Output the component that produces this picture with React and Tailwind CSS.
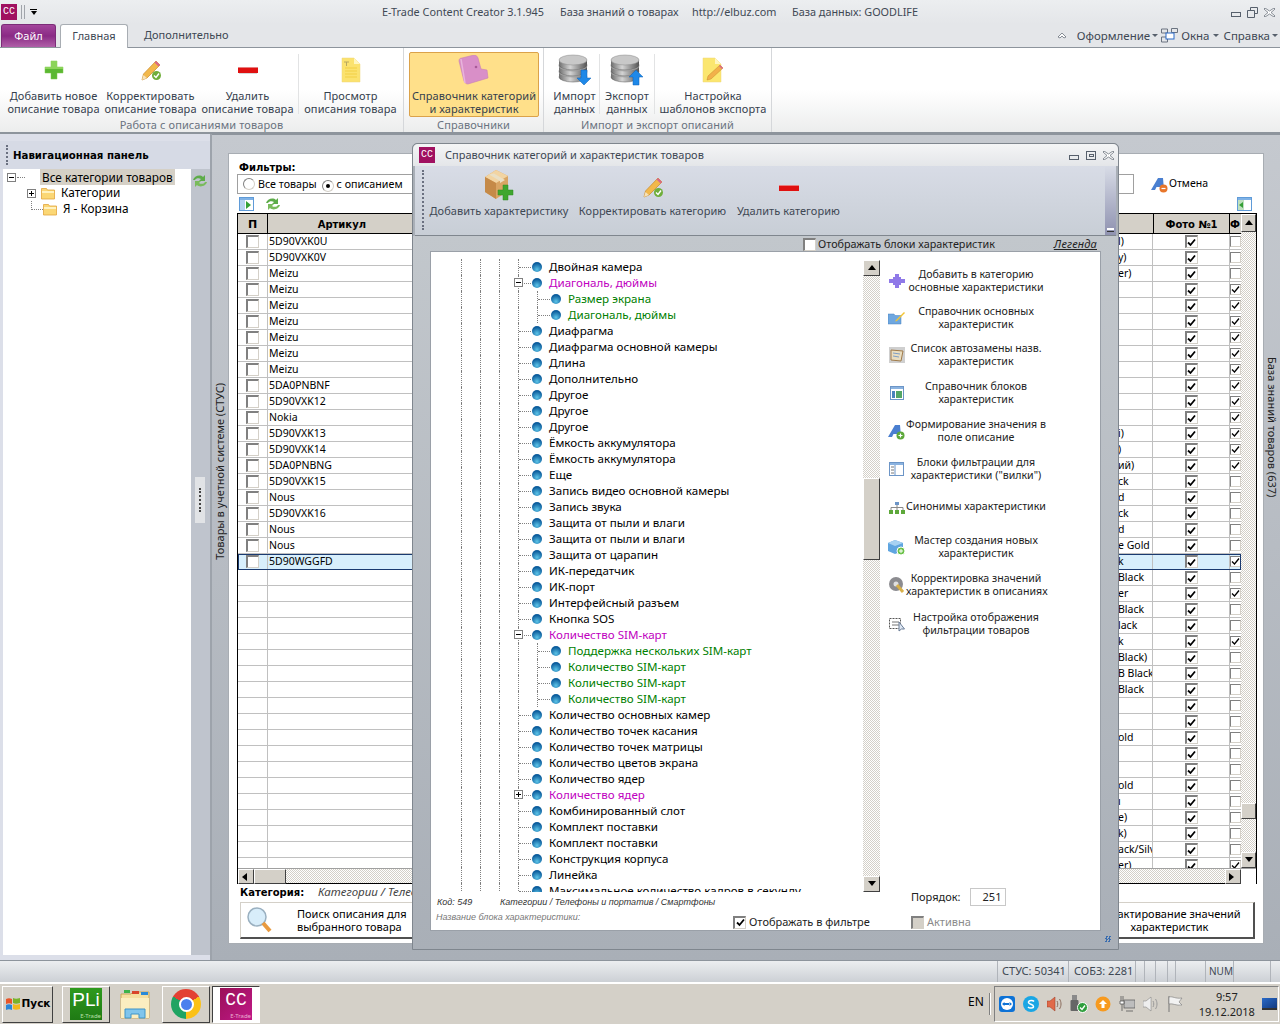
import React from "react";

const ui = "font-['Noto_Sans','Liberation_Sans',sans-serif]";
const bold = "font-['DejaVu_Sans',sans-serif] font-bold";

// --- icons ---
function GreenPlus({ s = 24 }) {
  return (
    <svg width={s} height={s} viewBox="0 0 24 24">
      <path d="M9 3h6v6h6v6h-6v6H9v-6H3V9h6z" fill="#5bb832" stroke="#7cc94e" strokeWidth="0.5" />
      <path d="M9 3h6v6h6v2H3V9h6z" fill="#8cd45a" />
    </svg>
  );
}
function PencilCheck({ s = 24 }) {
  return (
    <svg width={s} height={s} viewBox="0 0 24 24">
      <path d="M3 22l1.5-6L17 3l4 4L8 20z" fill="#f2b84b" stroke="#c98a2a" strokeWidth="0.7" />
      <path d="M17 3l4 4-1.5 1.5-4-4z" fill="#d9668a" />
      <path d="M3 22l1.5-5 3.5 3z" fill="#f6e2b8" />
      <circle cx="17.5" cy="17.5" r="4.5" fill="#6fae3a" />
      <path d="M15 17.5l2 2 3-4" stroke="#fff" strokeWidth="1.4" fill="none" />
    </svg>
  );
}
function RedMinus({ s = 24 }) {
  return (
    <svg width={s} height={s} viewBox="0 0 24 24">
      <rect x="2" y="10" width="20" height="5" fill="#e01010" />
      <rect x="2" y="9" width="20" height="1" fill="#e88080" />
      <rect x="3" y="15" width="18" height="1" fill="#d8d8d8" />
    </svg>
  );
}
function NoteIcon() {
  return (
    <svg width="24" height="26" viewBox="0 0 24 26">
      <path d="M3 1h12l6 6v18H3z" fill="#fbe26f" stroke="#efd77a" strokeWidth="0.5" />
      <path d="M15 1l6 6h-6z" fill="#fff6c0" />
      <path d="M6 11h12M6 14h12M6 17h12M6 20h12" stroke="#f2cf45" strokeWidth="1" />
      <path d="M5 5h5M7.5 5v4" stroke="#b8a860" strokeWidth="1" />
    </svg>
  );
}
function PinkBook() {
  return (
    <svg width="32" height="32" viewBox="0 0 32 32">
      <path d="M1 6c0-2 1-3 3-3l12-3c2 0 3 1 4 3l3 11 6 1 1 8-20 6c-2 0-3-1-4-3z" fill="#d98fc8" stroke="#c77fb6" strokeWidth="0.6" />
      <path d="M3 4l4 24" stroke="#e8b4dc" strokeWidth="1.5" />
      <circle cx="18" cy="12" r="1.3" fill="#a85a98" />
    </svg>
  );
}
function DbIcon({ up }) {
  return (
    <svg width="34" height="32" viewBox="0 0 34 32">
      <defs>
        <linearGradient id={up ? "dbu" : "dbd"} x1="0" x2="1" y1="0" y2="0">
          <stop offset="0" stopColor="#6e6e6e" />
          <stop offset="0.4" stopColor="#d4d4d4" />
          <stop offset="1" stopColor="#555" />
        </linearGradient>
      </defs>
      {[18, 12, 6].map((y) => (
        <g key={y}>
          <ellipse cx="15" cy={y + 5} rx="14" ry="5" fill={`url(#${up ? "dbu" : "dbd"})`} stroke="#555" strokeWidth="0.5" />
          <rect x="1" y={y} width="28" height="5" fill={`url(#${up ? "dbu" : "dbd"})`} />
          <ellipse cx="15" cy={y} rx="14" ry="5" fill="#c8c8c8" stroke="#888" strokeWidth="0.5" />
        </g>
      ))}
      {up ? (
        <path d="M26 16l7 7h-4v8h-6v-8h-4z" fill="#1e88e8" stroke="#0d62b8" strokeWidth="0.5" />
      ) : (
        <path d="M23 16h6v8h4l-7 7-7-7h4z" fill="#1e88e8" stroke="#0d62b8" strokeWidth="0.5" />
      )}
    </svg>
  );
}
function NotePencil() {
  return (
    <svg width="24" height="26" viewBox="0 0 24 26">
      <path d="M2 1h12l6 6v18H2z" fill="#fbe66f" stroke="#efd77a" strokeWidth="0.5" />
      <path d="M14 1l6 6h-6z" fill="#fff6c0" />
      <path d="M6 23l1-4L19 8l3 3L10 22z" fill="#f2b04b" stroke="#c98a2a" strokeWidth="0.5" />
      <path d="M19 8l3 3-1 1-3-3z" fill="#d9668a" />
    </svg>
  );
}
function BoxPlus() {
  return (
    <svg width="30" height="32" viewBox="0 0 30 32">
      <path d="M1 7l11-7 12 6v15l-12 8-11-7z" fill="#d9a564" />
      <path d="M1 7l11 6 12-7-12-6z" fill="#f2d4a2" />
      <path d="M12 13v16L1 22V7z" fill="#c58a48" />
      <path d="M5 4.5l11 6.5v2l5-3-11-6.5z" fill="#eadfc4" />
      <path d="M19 15h5v5h5v5h-5v5h-5v-5h-5v-5h5z" fill="#3fa62e" stroke="#2f8a22" strokeWidth="0.5" />
    </svg>
  );
}
function Sync({ s = 16 }) {
  return (
    <svg width={s} height={s} viewBox="0 0 16 16">
      <path d="M1 7c1-4 7-6 10-3l2-2v6H7l2-2C7 4.500 4 5 3 7z" fill="#5dac49" />
      <path d="M15 9c-1 4-7 6-10 3l-2 2V8h6l-2 2c2 1.500 5 1 6-1z" fill="#79bb5c" />
    </svg>
  );
}
function PanelArrow({ back }) {
  return (
    <svg width="15" height="14" viewBox="0 0 15 14">
      <rect x="0.5" y="0.500" width="14" height="13" fill="#fff" stroke="#5f9bd8" />
      <rect x="1" y="1" width="13" height="2" fill="#7fb2e6" />
      {back ? (
        <>
          <rect x="1" y="3" width="6" height="10" fill="#bfe0bf" />
          <path d="M6 5v6L2 8z" fill="#35a035" />
        </>
      ) : (
        <>
          <rect x="1" y="3" width="5" height="10" fill="#b7d3f0" />
          <path d="M7 4v8l5-4z" fill="#35a035" />
        </>
      )}
    </svg>
  );
}
function FontBadge({ minus }) {
  return (
    <svg width="17" height="17" viewBox="0 0 17 17">
      <path d="M0 14L7 2h5l1 12h-3l-.3-3H5.500L4 14z" fill="#4a7fd0" />
      <circle cx="12.500" cy="12.500" r="4" fill={minus ? "#e8762a" : "#5da83a"} />
      <path d={minus ? "M10.500 12.500h4" : "M10.500 12.500h4M12.500 10.500v4"} stroke="#fff" strokeWidth="1.2" />
    </svg>
  );
}
function Folder({ s = 14 }) {
  return (
    <svg width={s} height={s} viewBox="0 0 14 14">
      <path d="M0.500 2.500h5l1 1.500h7v9h-13z" fill="#fbd775" stroke="#e2a43c" strokeWidth="0.8" />
      <path d="M1 6h12" stroke="#fff2c0" strokeWidth="2" />
    </svg>
  );
}

// right panel icons
const actionIcons = [
  <svg key="0" width="16" height="16" viewBox="0 0 16 16"><path d="M6 1h4v3h2v2h4v4h-4v2h-2v3H6v-3H4v-2H0V6h4V4h2z" fill="#8f79e8" /></svg>,
  <svg key="1" width="17" height="14" viewBox="0 0 17 14"><path d="M0 3h6l1 1.500h6V13H0z" fill="#6ea7e0" stroke="#4a82bc" strokeWidth="0.5" /><path d="M8 9l8-8 1 1-8 8-2 .5z" fill="#f3c432" /></svg>,
  <svg key="2" width="16" height="16" viewBox="0 0 16 16"><rect width="16" height="16" fill="#cfcfcf" /><path d="M2 3l12 1-2 10-10-1z" fill="#e9ddc0" stroke="#a07b4a" /><path d="M4 6l7 1M4 9l6 1" stroke="#7e9ec4" /></svg>,
  <svg key="3" width="14" height="14" viewBox="0 0 14 14"><rect x="0.500" y="0.500" width="13" height="13" fill="#fff" stroke="#6c95c7" /><rect x="1" y="1" width="12" height="2" fill="#8bb3e0" /><rect x="2" y="5" width="3" height="7" fill="#4a82bc" /><rect x="6" y="5" width="6" height="7" fill="#53a565" /></svg>,
  <span key="4" className="flex"><FontBadge /></span>,
  <svg key="5" width="15" height="14" viewBox="0 0 15 14"><rect x="0.500" y="0.500" width="14" height="13" fill="#fff" stroke="#6c95c7" /><rect x="1" y="1" width="13" height="2" fill="#8bb3e0" /><path d="M6 3v10" stroke="#6c95c7" /><path d="M2 5h3M2 8h3M2 11h3" stroke="#777" /></svg>,
  <svg key="6" width="16" height="14" viewBox="0 0 16 14"><rect x="6" y="1" width="4" height="3" fill="#6c95c7" /><path d="M2 9V6.500h12V9M8 4v5" stroke="#8a8a8a" fill="none" /><rect y="9" width="4" height="4" fill="#5da83a" /><rect x="6" y="9" width="4" height="4" fill="#5da83a" /><rect x="12" y="9" width="4" height="4" fill="#5da83a" /></svg>,
  <svg key="7" width="17" height="16" viewBox="0 0 17 16"><path d="M0 4l7-3 8 3v8l-8 3-7-3z" fill="#5fa5e0" /><path d="M0 4l7 3 8-3-8-3z" fill="#a7d2f2" /><circle cx="13" cy="12" r="4" fill="#6cc24a" stroke="#fff" /><path d="M11 12h4M13 10v4" stroke="#fff" /></svg>,
  <svg key="8" width="16" height="16" viewBox="0 0 16 16"><circle cx="7" cy="7" r="7" fill="#8c8c90" /><circle cx="7" cy="7" r="2.500" fill="#e0e0e0" /><path d="M8 8l6 7" stroke="#d8b04a" strokeWidth="3" /></svg>,
  <svg key="9" width="16" height="16" viewBox="0 0 16 16"><rect x="0.500" y="2.500" width="11" height="10" fill="none" stroke="#555" strokeDasharray="2 1" /><path d="M3 6h7M3 9h7" stroke="#777" /><path d="M10 6v9l2.500-2 3 0z" fill="#dfe8f4" stroke="#6a7c96" /></svg>,
];

// --- small widgets ---
function Check({ on, small, dim }) {
  return (
    <span
      className={`inline-flex items-center justify-center shrink-0 border border-t-[#808080] border-l-[#808080] border-r-[#d4d0c8] border-b-[#d4d0c8] ${
        small ? "w-[11px] h-[11px]" : "w-[13px] h-[13px] border-t-2 border-l-2"
      } ${dim ? "bg-[#d4d0c8]" : "bg-white"}`}
    >
      {on && (
        <svg width="9" height="9" viewBox="0 0 9 9">
          <path d="M1 4.500l2.500 2.500L8 1.500" stroke="#000" strokeWidth={small ? 1.300 : 1.800} fill="none" />
        </svg>
      )}
    </span>
  );
}
function Radio({ on }) {
  return (
    <span className="inline-flex items-center justify-center w-[12px] h-[12px] rounded-full border border-t-[#808080] border-l-[#808080] border-r-[#d4d0c8] border-b-[#d4d0c8] bg-white">
      {on && <span className="w-1 h-1 rounded-full bg-black" />}
    </span>
  );
}
function ScrollBtn({ dir, w = "w-[16px]", h = "h-[16px]" }) {
  const paths = { up: "M4 0l4 5H0z", down: "M0 0h8L4 5z", left: "M5 0v8L0 4z", right: "M0 0v8l5-4z" };
  return (
    <div className={`${w} ${h} shrink-0 flex items-center justify-center bg-[#d4d0c8] border border-t-white border-l-white border-r-[#404040] border-b-[#404040]`}>
      <svg width="8" height="8" viewBox="0 0 8 8" className="overflow-visible"><path d={paths[dir]} fill="#000" transform="translate(0 1)" /></svg>
    </div>
  );
}
const hatch = "bg-[repeating-conic-gradient(#d4d0c8_0%_25%,#ffffff_0%_50%)] bg-[length:2px_2px]";
const thumb = "bg-[#d4d0c8] border border-t-white border-l-white border-r-[#404040] border-b-[#404040]";

function RibbonBtn({ w, icon, lines, active }) {
  return (
    <div
      className={`${w} h-[65px] shrink-0 flex flex-col items-center rounded-[2px] ${
        active ? "bg-[#ffe08a] border border-[#dba24a] mt-[1px]" : ""
      }`}
    >
      <div className={`flex items-center justify-center ${active ? "h-[36px]" : "h-[38px]"}`}>{icon}</div>
      <div className="text-[11px] tracking-[0.1px] leading-[13px] text-center text-[#35404d] whitespace-nowrap">
        {lines.map((l) => (
          <div key={l}>{l}</div>
        ))}
      </div>
    </div>
  );
}
function RibbonSep() {
  return <div className="w-px h-[60px] mt-[3px] bg-[#e2e3e4] shrink-0" />;
}
function RibbonGroup({ w, label, children }) {
  return (
    <div className={`${w} shrink-0 flex flex-col border-r border-[#d5d7da] pl-[5px]`}>
      <div className="flex h-[71px] pt-[3px]">{children}</div>
      <div className="text-[11px] tracking-[0.1px] leading-[13px] text-center text-[#6a7380] -ml-[5px] mt-[-1px]">{label}</div>
    </div>
  );
}

// --- grid data ---
const articles = [
  "5D90VXK0U", "5D90VXK0V", "Meizu", "Meizu", "Meizu", "Meizu", "Meizu", "Meizu", "Meizu",
  "5DA0PNBNF", "5D90VXK12", "Nokia", "5D90VXK13", "5D90VXK14", "5DA0PNBNG", "5D90VXK15",
  "Nous", "5D90VXK16", "Nous", "Nous", "5D90WGGFD",
];
const tails = {
  0: "l)", 1: "y)", 2: "er)", 12: "i)", 13: ")", 14: "ий)", 15: "ck", 16: "d", 17: "ck", 18: "d",
  19: "e Gold", 20: "k", 21: "Black", 22: "er", 23: "Black", 24: "lack", 25: "k", 26: "Black)",
  27: "B Black", 28: "Black", 31: "old", 34: "old", 35: "ı", 36: "e)", 37: "k)", 38: "ack/Silver", 39: "er)",
};
const photo2 = [3, 4, 5, 6, 7, 8, 9, 10, 11, 12, 13, 14, 20, 22, 25, 39];
const rows = Array.from({ length: 40 }, (_, i) => i);

function GridRow({ i }) {
  const sel = i === 20;
  return (
    <div className={`flex h-4 shrink-0 text-[10.5px] leading-[14px] border-b border-[#c0c0c0] ${sel ? "bg-[#d8effc] outline outline-1 -outline-offset-1 outline-[#1a3a70]" : "bg-white"}`}>
      <div className="w-[30px] shrink-0 flex items-center justify-center border-r border-[#c0c0c0]">
        {i <= 20 && <Check />}
      </div>
      <div className="flex-1 pl-[1px] overflow-hidden whitespace-nowrap">{articles[i]}</div>
      <div className="w-[37px] shrink-0 pl-[2px] overflow-hidden whitespace-nowrap border-r border-[#c0c0c0]">{tails[i]}</div>
      <div className="w-[77px] shrink-0 flex items-center justify-center border-r border-[#c0c0c0]">
        <Check on />
      </div>
      <div className="w-[11px] shrink-0 flex items-center">
        <Check small on={photo2.includes(i)} />
      </div>
    </div>
  );
}

// --- tree ---
const tree = [
  ["Двойная камера"],
  ["Диагональ, дюймы", "p", "-"],
  ["Размер экрана", "c"],
  ["Диагональ, дюймы", "c"],
  ["Диафрагма"],
  ["Диафрагма основной камеры"],
  ["Длина"],
  ["Дополнительно"],
  ["Другое"],
  ["Другое"],
  ["Другое"],
  ["Ёмкость аккумулятора"],
  ["Ёмкость аккумулятора"],
  ["Еще"],
  ["Запись видео основной камеры"],
  ["Запись звука"],
  ["Защита от пыли и влаги"],
  ["Защита от пыли и влаги"],
  ["Защита от царапин"],
  ["ИК-передатчик"],
  ["ИК-порт"],
  ["Интерфейсный разъем"],
  ["Кнопка SOS"],
  ["Количество SIM-карт", "p", "-"],
  ["Поддержка нескольких SIM-карт", "c"],
  ["Количество SIM-карт", "c"],
  ["Количество SIM-карт", "c"],
  ["Количество SIM-карт", "c"],
  ["Количество основных камер"],
  ["Количество точек касания"],
  ["Количество точек матрицы"],
  ["Количество цветов экрана"],
  ["Количество ядер"],
  ["Количество ядер", "p", "+"],
  ["Комбинированный слот"],
  ["Комплект поставки"],
  ["Комплект поставки"],
  ["Конструкция корпуса"],
  ["Линейка"],
  ["Максимальное количество кадров в секунду"],
];

function Guide({ children }) {
  return <div className="relative w-[19px] h-4 shrink-0 border-l border-dotted border-[#808080]">{children}</div>;
}
function Conn({ box }) {
  return (
    <Guide>
      <div className="absolute left-0 top-[8px] w-[12px] border-t border-dotted border-[#808080]" />
      {box && (
        <div className="absolute left-[-5px] top-[3px] w-[9px] h-[9px] bg-white border border-[#808080] flex items-center justify-center">
          <div className="absolute w-[5px] h-px bg-black" />
          {box === "+" && <div className="absolute h-[5px] w-px bg-black" />}
        </div>
      )}
    </Guide>
  );
}
function TreeRow({ label, kind, box }) {
  const color = kind === "p" ? "text-[#c000c0]" : kind === "c" ? "text-[#008000]" : "text-black";
  return (
    <div className="flex items-center h-4 shrink-0 pl-[30px] whitespace-nowrap">
      <Guide /><Guide /><Guide />
      {kind === "c" ? <><Guide /><Conn /></> : <Conn box={box} />}
      <div className="w-[10px] h-[10px] rounded-full shrink-0 -ml-[5px] bg-[radial-gradient(circle_at_50%_75%,#5cc4e8,#0b5c9c_70%)]" />
      <div className={`ml-[7px] text-[11.6px] leading-[16px] ${color}`}>{label}</div>
    </div>
  );
}

const actions = [
  ["Добавить в категорию", "основные характеристики"],
  ["Справочник основных", "характеристик"],
  ["Список автозамены назв.", "характеристик"],
  ["Справочник блоков", "характеристик"],
  ["Формирование значения в", "поле описание"],
  ["Блоки фильтрации для", "характеристики (\"вилки\")"],
  ["Синонимы характеристики"],
  ["Мастер создания новых", "характеристик"],
  ["Корректировка значений", "характеристик в описаниях"],
  ["Настройка отображения", "фильтрации товаров"],
];
const actionTops = ["mt-[8px]", "mt-[11px]", "mt-[11px]", "mt-[12px]", "mt-[12px]", "mt-[12px]", "mt-[13px]", "mt-[13px]", "mt-[12px]", "mt-[13px]"];

function Modal() {
  return (
    <div className={`absolute left-[412px] top-[143px] w-[707px] h-[807px] flex flex-col bg-[#a9afb7] border border-[#7f868e] rounded-t-[5px] ${ui}`}>
      <div className="h-[22px] shrink-0 flex items-center pl-[6px] pr-[4px] rounded-t-[5px] bg-gradient-to-b from-[#f4f5f6] to-[#e4e6e9]">
        <div className="w-[16px] h-[16px] bg-[#a01060] text-white text-[10px] leading-[16px] text-center font-['Liberation_Mono',monospace]">CC</div>
        <div className="ml-[10px] text-[11px] text-[#3e4854]">Справочник категорий и характеристик товаров</div>
        <div className="ml-auto flex items-center gap-[7px] text-[#57606c]">
          <div className="w-[10px] h-[5px] mt-[5px] border border-[#57606c]" />
          <div className="w-[10px] h-[9px] border border-[#57606c] flex items-center justify-center"><div className="w-[5px] h-[3px] border border-[#57606c]" /></div>
          <svg width="11" height="9" viewBox="0 0 11 9"><path d="M1 0l4.500 3L10 0l1 1-4 3.500 4 3.500-1 1-4.500-3L1 9 0 8l4-3.500L0 1z" fill="#fff" stroke="#57606c" strokeWidth="0.700" /></svg>
        </div>
      </div>
      <div className="h-[70px] shrink-0 flex ml-[2px] mr-[2px] bg-gradient-to-b from-[#d8dce6] to-[#c8ced6] border-b border-[#7f868e]">
        <div className="w-[2px] h-[60px] mt-[4px] ml-[7px] border-l-2 border-dotted border-[#6a7080]" />
        <div className="flex text-[11px] tracking-[0.05px] text-[#3e4854] whitespace-nowrap">
          <div className="ml-[5px] w-[140px] flex flex-col items-center pt-[4px]">
            <BoxPlus />
            <div className="mt-[2px] leading-[14px]">Добавить характеристику</div>
          </div>
          <div className="ml-[9px] w-[149px] flex flex-col items-center pt-[9px]">
            <PencilCheck s={24} />
            <div className="mt-[5px] leading-[14px]">Корректировать категорию</div>
          </div>
          <div className="ml-[10px] w-[103px] flex flex-col items-center pt-[10px]">
            <RedMinus s={24} />
            <div className="mt-[4px] leading-[14px]">Удалить категорию</div>
          </div>
        </div>
        <div className="ml-auto w-[11px] bg-gradient-to-b from-[#d8dce6] to-[#8f92b0] flex items-end justify-center pb-[3px]">
          <div className="w-[7px] h-[4px] border-t-2 border-[#fff] border-b border-b-[#333]" />
        </div>
      </div>
      <div className="flex-1 flex flex-col min-h-0 bg-gradient-to-b from-[#c2c7cc] to-[#a9afb7] pl-[17px] pr-[17px]">
        <div className="h-[14px] shrink-0 flex items-center text-[10.8px] text-[#222] mt-[1px]">
          <div className="ml-[373px] flex items-center gap-[2px]"><Check /><span>Отображать блоки характеристик</span></div>
          <span className="ml-auto mr-[4px] italic underline text-[11px] tracking-[0.2px]">Легенда</span>
        </div>
        <div className="flex-1 min-h-0 flex flex-col bg-white border border-[#9aa0a8] mb-[18px]">
          <div className="flex h-[640px] shrink-0">
            <div className="w-[432px] pt-[7px] overflow-hidden flex flex-col">
              {tree.map(([label, kind, box], i) => (
                <TreeRow key={i} label={label} kind={kind} box={box} />
              ))}
            </div>
            <div className={`w-[17px] shrink-0 mt-[8px] flex flex-col ${hatch}`}>
              <ScrollBtn dir="up" w="w-[17px]" />
              <div className="h-[202px]" />
              <div className={`h-[82px] ${thumb}`} />
              <div className="flex-1" />
              <ScrollBtn dir="down" w="w-[17px]" />
            </div>
            <div className="flex-1 pl-[8px] pr-[2px] flex flex-col pt-[16px]">
              {actions.map((lines, i) => (
                <div key={i} className={`flex items-center h-[26px] ${i ? actionTops[i] : ""}`}>
                  <div className="w-[17px] shrink-0 flex justify-center">{actionIcons[i]}</div>
                  <div className={`w-[140px] ml-[1px] text-center text-[10.6px] leading-[13px] text-[#222] whitespace-nowrap ${lines.length === 1 ? "pb-[4px]" : ""}`}>
                    {lines.map((l) => <div key={l}>{l}</div>)}
                  </div>
                </div>
              ))}
            </div>
          </div>
          <div className="flex-1 relative text-[#333]">
            <div className="flex pl-[6px] pt-[4px] text-[9px] italic font-['Liberation_Sans',sans-serif]">
              <span className="w-[63px]">Код: 549</span>
              <span>Категории / Телефоны и портатив / Смартфоны</span>
            </div>
            <div className="pl-[5px] mt-[1px] text-[9px] italic text-[#777] font-['Liberation_Sans',sans-serif]">Название блока характеристики:</div>
            <div className="absolute left-[302px] top-[22px] flex items-center gap-[3px] text-[11px] text-[#222]"><Check on /><span>Отображать в фильтре</span></div>
            <div className="absolute left-[480px] top-[22px] flex items-center gap-[3px] text-[11px] text-[#8a8a8a]"><Check dim /><span>Активна</span></div>
            <div className="absolute left-[480px] top-[-4px] flex items-center text-[11px] text-[#222]">
              <span className="w-[59px]">Порядок:</span>
              <span className="w-[36px] h-[18px] border border-[#c8c8c8] text-center leading-[16px] pl-[8px]">251</span>
            </div>
          </div>
        </div>
      </div>
      <div className="absolute right-[7px] bottom-[7px] w-[6px] h-[6px] bg-[repeating-conic-gradient(#3a6db0_0%_25%,transparent_0%_50%)] bg-[length:3px_3px]" />
    </div>
  );
}

function TaskBtn({ w, children, pressed }) {
  return (
    <div
      className={`${w} h-[37px] shrink-0 flex items-center justify-center border ${
        pressed ? "border-t-[#404040] border-l-[#404040] border-r-white border-b-white bg-white" : "border-t-white border-l-white border-r-[#404040] border-b-[#404040]"
      }`}
    >
      {children}
    </div>
  );
}
const trayIcons = [
  <svg key="t" width="16" height="16" viewBox="0 0 16 16"><rect width="16" height="16" rx="3" fill="#0d72d6" /><circle cx="8" cy="8" r="6" fill="#fff" /><path d="M3 8l2.500-2v4zM13 8l-2.500-2v4zM5 7h6v2H5z" fill="#0d72d6" /></svg>,
  <svg key="s" width="16" height="16" viewBox="0 0 16 16"><circle cx="8" cy="8" r="8" fill="#1aa6e4" /><path d="M11 5.500C10 4 6 4 5.500 6c-.5 2.500 5 2 5 4.500 0 2-4 2-5.500.5" stroke="#fff" strokeWidth="1.500" fill="none" /></svg>,
  <svg key="v" width="16" height="16" viewBox="0 0 16 16"><path d="M0 5h3l5-4v14l-5-4H0z" fill="#e06a4a" stroke="#9b3a22" strokeWidth="0.500" /><path d="M10 5c1 2 1 4 0 6M12.500 3c2 3 2 7 0 10" stroke="#8a6a5a" fill="none" /></svg>,
  <svg key="u" width="18" height="18" viewBox="0 0 18 18"><rect x="2" y="0" width="5" height="5" fill="#8a8a8a" /><rect x="0.500" y="5" width="8" height="11" rx="1" fill="#666" /><circle cx="12.500" cy="12.500" r="5" fill="#2e9e3c" stroke="#fff" /><path d="M10 12.500l2 2 3-4" stroke="#fff" strokeWidth="1.300" fill="none" /></svg>,
  <svg key="o" width="16" height="16" viewBox="0 0 16 16"><circle cx="8" cy="8" r="7.500" fill="#f79a1f" /><path d="M8 4l4 4H9.500v4h-3V8H4z" fill="#fff" /></svg>,
  <svg key="n" width="16" height="16" viewBox="0 0 16 16"><rect x="5" y="4" width="11" height="8" fill="#bdbdbd" stroke="#555" strokeWidth="0.700" /><path d="M2 0v5M4 0v5M1 5h4v3H1zM3 8v7M7 15h7" stroke="#555" strokeWidth="0.800" fill="#fff" /></svg>,
  <svg key="vv" width="16" height="16" viewBox="0 0 16 16"><path d="M0 5h3l5-4v14l-5-4H0z" fill="#eee" stroke="#777" strokeWidth="0.500" /><path d="M10 5c1 2 1 4 0 6M12.500 3c2 3 2 7 0 10" stroke="#999" fill="none" /></svg>,
  <svg key="f" width="16" height="16" viewBox="0 0 16 16"><path d="M2 0v16" stroke="#777" /><path d="M2 1c4-1 6 2 13 1l-3 4 3 3c-6 1-9-2-13-1z" fill="#f2f2f2" stroke="#777" strokeWidth="0.600" /></svg>,
];

export default function App() {
  return (
    <div className={`relative w-[1280px] h-[1024px] overflow-hidden flex flex-col bg-[#a9afb7] text-black ${ui}`}>
      {/* title bar */}
      <div className="h-[24px] shrink-0 flex items-center bg-gradient-to-b from-[#eceef0] to-[#e4e6e9] text-[10.85px] text-[#3e4854]">
        <div className="ml-[1px] w-[16px] h-[16px] bg-[#a01060] text-white text-[10px] leading-[16px] text-center font-['Liberation_Mono',monospace]">CC</div>
        <div className="ml-[4px] w-[4px] h-[14px] border-x border-[#a0a4aa]" />
        <div className="ml-[5px] flex flex-col items-center gap-[1px]"><div className="w-[7px] h-px bg-black" /><div className="w-0 h-0 border-x-[3px] border-x-transparent border-t-[4px] border-t-black" /></div>
        <span className="ml-[345px] w-[178px] whitespace-nowrap">E-Trade Content Creator 3.1.945</span>
        <span className="w-[132px] whitespace-nowrap">База знаний о товарах</span>
        <span className="w-[100px] whitespace-nowrap">http://elbuz.com</span>
        <span className="whitespace-nowrap">База данных: GOODLIFE</span>
        <div className="ml-auto mr-[5px] flex items-center gap-[6px]">
          <div className="w-[10px] h-[5px] mt-[4px] border border-[#57606c]" />
          <svg width="11" height="11" viewBox="0 0 11 11"><path d="M3.500 3V.500h7v6H7.500M.500 3.500h7v7h-7z" fill="none" stroke="#57606c" /></svg>
          <svg width="11" height="9" viewBox="0 0 11 9"><path d="M1 0l4.500 3L10 0l1 1-4 3.500 4 3.500-1 1-4.500-3L1 9 0 8l4-3.500L0 1z" fill="#fff" stroke="#57606c" strokeWidth="0.700" /></svg>
        </div>
      </div>
      {/* tabs */}
      <div className="h-[24px] shrink-0 flex items-end bg-[#e4e6e9] border-b border-[#8d949c] text-[11px] text-[#3e4854]">
        <div className="ml-[1px] w-[55px] h-[23px] flex items-center justify-center rounded-t-[3px] bg-gradient-to-b from-[#a3459b] via-[#8a2a85] to-[#b05fa8] text-white border border-[#7c2c78] border-b-0">Файл</div>
        <div className="ml-[4px] w-[68px] h-[24px] flex items-center justify-center rounded-t-[3px] bg-white border border-[#a8adb3] border-b-0 -mb-px">Главная</div>
        <div className="ml-[16px] h-[23px] flex items-center">Дополнительно</div>
        <div className="ml-auto mr-[2px] h-[23px] flex items-center whitespace-nowrap text-[11.5px]">
          <svg width="10" height="7" viewBox="0 0 10 7"><path d="M1 5l4-4 4 4-2 1-2-2-2 2z" fill="#fff" stroke="#57606c" strokeWidth="0.700" /></svg>
          <span className="ml-[10px]">Оформление</span>
          <div className="ml-[2px] w-0 h-0 border-x-[3px] border-x-transparent border-t-[3px] border-t-[#57606c]" />
          <svg className="ml-[3px]" width="17" height="15" viewBox="0 0 17 15"><path d="M.500 1h6v4h-6zM.500 9h6v5h-6zM10.500.500h6v4h-6z" fill="none" stroke="#6a7380" /><rect x="5" y="5" width="8" height="6" fill="#fff" stroke="#2a6ac8" /></svg>
          <span className="ml-[3px]">Окна</span>
          <div className="ml-[3px] w-0 h-0 border-x-[3px] border-x-transparent border-t-[3px] border-t-[#57606c]" />
          <span className="ml-[5px]">Справка</span>
          <div className="ml-[2px] w-0 h-0 border-x-[3px] border-x-transparent border-t-[3px] border-t-[#57606c]" />
        </div>
      </div>
      {/* ribbon */}
      <div className="h-[86px] shrink-0 flex bg-gradient-to-b from-white via-white to-[#eceded] border-b-2 border-[#8d949c]">
        <RibbonGroup w="w-[404px]" label="Работа с описаниями товаров">
          <RibbonBtn w="w-[97px]" icon={<GreenPlus />} lines={["Добавить новое", "описание товара"]} />
          <RibbonBtn w="w-[97px]" icon={<PencilCheck />} lines={["Корректировать", "описание товара"]} />
          <RibbonBtn w="w-[97px]" icon={<RedMinus />} lines={["Удалить", "описание товара"]} />
          <div className="w-[2px]" />
          <RibbonSep />
          <RibbonBtn w="w-[103px]" icon={<NoteIcon />} lines={["Просмотр", "описания товара"]} />
        </RibbonGroup>
        <RibbonGroup w="w-[140px]" label="Справочники">
          <RibbonBtn w="w-[130px]" active icon={<PinkBook />} lines={["Справочник категорий", "и характеристик"]} />
        </RibbonGroup>
        <RibbonGroup w="w-[228px]" label="Импорт и экспорт описаний">
          <div className="w-px" />
          <RibbonBtn w="w-[49px]" icon={<DbIcon />} lines={["Импорт", "данных"]} />
          <RibbonSep />
          <RibbonBtn w="w-[54px]" icon={<DbIcon up />} lines={["Экспорт", "данных"]} />
          <RibbonSep />
          <RibbonBtn w="w-[116px]" icon={<NotePencil />} lines={["Настройка", "шаблонов экспорта"]} />
        </RibbonGroup>
      </div>
      {/* main */}
      <div className="flex-1 min-h-0 flex">
        {/* navigation panel */}
        <div className="relative w-[212px] shrink-0 flex flex-col bg-[#dcdfe9] border-r-2 border-[#9da3ab] pt-[7px]">
          <div className="h-[28px] shrink-0 flex items-center pl-[6px] bg-[#d6dae5]">
            <div className="w-[2px] h-[20px] border-l-2 border-dotted border-[#6a7080]" />
            <span className={`ml-[5px] mt-[2px] text-[10.2px] ${bold}`}>Навигационная панель</span>
          </div>
          <div className="flex-1 min-h-0 flex ml-[3px] mb-[5px]">
            <div className="w-[188px] bg-white text-[11.8px]">
              <div className="flex items-center h-4 pl-[4px]">
                <div className="relative w-[9px] h-[9px] border border-[#808080] flex items-center justify-center"><div className="w-[5px] h-px bg-black" /></div>
                <div className="w-[8px] ml-px border-t border-dotted border-[#808080]" />
                <div className="ml-[15px] px-[2px] bg-[#d5d0c6] leading-[16px] whitespace-nowrap">Все категории товаров</div>
              </div>
              <div className="flex items-center h-4 pl-[24px]">
                <div className="relative w-[9px] h-[9px] border border-[#808080] flex items-center justify-center"><div className="w-[5px] h-px bg-black" /><div className="absolute h-[5px] w-px bg-black" /></div>
                <div className="ml-[5px]"><Folder /></div>
                <span className="ml-[6px]">Категории</span>
              </div>
              <div className="flex items-center h-4 pl-[28px]">
                <div className="w-[12px] h-[9px] -mt-[8px] border-l border-b border-dotted border-[#808080]" />
                <div><Folder /></div>
                <span className="ml-[6px]">Я - Корзина</span>
              </div>
            </div>
            <div className="flex-1 bg-[#bfc4cd] flex flex-col items-center pt-[4px] pr-[1px]">
              <Sync />
              <div className="mt-[288px] w-[10px] h-[46px] bg-[#e1e3e6] flex items-center justify-center">
                <div className="h-[24px] border-l-2 border-dotted border-[#444]" />
              </div>
            </div>
          </div>
        </div>
        {/* content */}
        <div className="flex-1 flex bg-gradient-to-b from-[#c5c9cf] to-[#a9afb7] pt-[18px] pb-[16px] border-t border-[#8d949c]">
          <div className="w-[16px] shrink-0 flex items-center justify-center">
            <span className="[writing-mode:vertical-rl] rotate-180 text-[11px] text-[#222] whitespace-nowrap mt-[-155px]">Товары в учетной системе (СТУС)</span>
          </div>
          <div className="flex-1 min-w-0 flex flex-col bg-white border border-[#a8adb3] pl-[8px] pr-[6px] pt-[7px]">
            <div className={`text-[10px] leading-[13px] pl-[2px] ${bold}`}>Фильтры:</div>
            <div className="flex items-center h-[20px] shrink-0 mb-[1px]">
              <div className="w-[897px] h-[20px] border border-[#a0a0a0] flex items-center text-[10.7px] pl-[5px]">
                <Radio /><span className="ml-[3px]">Все товары</span>
                <span className="ml-[5px]"><Radio on /></span><span className="ml-[3px]">с описанием</span>
              </div>
              <div className="ml-[17px]"><FontBadge minus /></div>
              <span className="ml-px -mt-[1px] text-[10.5px]">Отмена</span>
            </div>
            <div className="flex items-center h-[18px] shrink-0 pl-[2px] pr-[5px]">
              <PanelArrow />
              <span className="ml-[11px]"><Sync /></span>
              <span className="ml-auto"><PanelArrow back /></span>
            </div>
            {/* grid */}
            <div className="h-[671px] shrink-0 flex flex-col border border-black">
              <div className="flex-1 min-h-0 flex">
                <div className="flex-1 min-w-0 flex flex-col overflow-hidden">
                  <div className={`flex h-[20px] shrink-0 bg-[#d4d0c8] text-[10px] border-b border-black ${bold} text-center leading-[21px]`}>
                    <div className="w-[30px] shrink-0 border-r border-black text-[11px]">П</div>
                    <div className="flex-1 text-right pr-[786px] border-r border-transparent">Артикул</div>
                    <div className="w-[77px] shrink-0 border-x border-black">Фото №1</div>
                    <div className="w-[11px] shrink-0 overflow-hidden text-left">Ф</div>
                  </div>
                  {rows.map((i) => (
                    <GridRow key={i} i={i} />
                  ))}
                </div>
                <div className={`w-[15px] shrink-0 flex flex-col ${hatch}`}>
                  <ScrollBtn dir="up" w="w-[15px]" h="h-[18px]" />
                  <div className="flex-1" />
                  <div className={`h-[16px] ${thumb}`} />
                  <div className="h-[33px]" />
                  <ScrollBtn dir="down" w="w-[15px]" />
                </div>
              </div>
              <div className={`h-[15px] shrink-0 flex items-center border-t border-[#a0a0a0] ${hatch}`}>
                <ScrollBtn dir="left" h="h-[15px]" />
                <div className={`w-[32px] h-[15px] ${thumb}`} />
                <div className="flex-1" />
                <ScrollBtn dir="right" h="h-[15px]" />
                <div className="w-[15px] h-[15px] bg-white" />
              </div>
            </div>
            <div className="flex items-center h-[16px] shrink-0 pl-[3px] whitespace-nowrap">
              <span className={`text-[10px] w-[78px] ${bold}`}>Категория:</span>
              <span className="text-[11.5px] italic text-[#444]">Категории / Телефоны</span>
            </div>
            <div className="flex justify-between h-[37px] mt-[2px] ml-[3px] mr-[2px] shrink-0">
              <div className="w-[400px] flex items-center border border-[#d4d0c8] border-b-[#505050] border-b-2 text-[11px] leading-[13px] whitespace-nowrap">
                <svg className="ml-[5px]" width="26" height="26" viewBox="0 0 26 26"><circle cx="11" cy="10" r="9" fill="#d8edfa" stroke="#9ab0c0" strokeWidth="1.500" /><path d="M17 16l7 8" stroke="#e89a40" strokeWidth="4" /></svg>
                <div className="ml-[25px]"><div>Поиск описания для</div><div>выбранного товара</div></div>
              </div>
              <div className="w-[170px] flex items-center justify-center border border-[#d4d0c8] border-r-[#505050] border-b-[#505050] border-r-2 border-b-2 text-[11px] leading-[13px] text-center whitespace-nowrap">
                <div><div>Редактирование значений</div><div>характеристик</div></div>
              </div>
            </div>
          </div>
          <div className="w-[16px] shrink-0 flex items-center justify-center">
            <span className="[writing-mode:vertical-rl] text-[11px] text-[#222] whitespace-nowrap mt-[-243px]">База знаний товаров (637)</span>
          </div>
        </div>
      </div>
      {/* status bar */}
      <div className="h-[22px] shrink-0 flex items-center bg-gradient-to-b from-[#eceef0] to-[#ccd0d5] border-t border-[#8d949c] text-[11px] text-[#3e4854] whitespace-nowrap">
        <div className="ml-[997px] h-full flex items-center border-l border-[#b0b4ba] pl-[4px] w-[71px]">СТУС: 50341</div>
        <div className="h-full flex items-center border-l border-[#b0b4ba] pl-[5px] w-[67px]">СОБЗ: 2281</div>
        <div className="h-full w-[9px] border-l border-[#b0b4ba]" />
        <div className="h-full w-[11px] border-l border-[#b0b4ba]" />
        <div className="h-full w-[12px] border-l border-[#b0b4ba]" />
        <div className="h-full w-[8px] border-l border-[#b0b4ba]" />
        <div className="h-full w-[30px] border-l border-[#b0b4ba]" />
        <div className="h-full w-[28px] border-l border-[#b0b4ba] flex items-center pl-[3px] text-[10px]">NUM</div>
        <div className="h-full w-[37px] border-l border-[#b0b4ba]" />
        <div className="h-full flex-1 border-l border-[#b0b4ba]" />
      </div>
      {/* taskbar */}
      <div className="h-[42px] shrink-0 flex items-center bg-[#d4d0c8] border-t-2 border-white pl-[2px]">
        <TaskBtn w="w-[51px]">
          <svg width="16" height="14" viewBox="0 0 16 14"><path d="M1 2c2-1 4-1 6 0v5C5 6 3 6 1 7z" fill="#e8552a" /><path d="M8 1c2 1 4 1 7 0v5c-3 1-5 1-7 0z" fill="#79b32a" /><path d="M1 8c2-1 4-1 6 0v5c-2-1-4-1-6 0z" fill="#2a86d8" /><path d="M8 7c2 1 4 1 7 0v5c-3 1-5 1-7 0z" fill="#f2b81c" /></svg>
          <span className={`ml-[1px] text-[10.5px] ${bold}`}>Пуск</span>
        </TaskBtn>
        <div className="w-[9px]" />
        <TaskBtn w="w-[48px]">
          <div className="w-[32px] h-[32px] bg-gradient-to-b from-[#2f9a1e] to-[#1f7a14] flex flex-col items-center text-white">
            <div className="text-[19px] leading-[24px] font-['Liberation_Sans',sans-serif]">PLi</div>
            <div className="text-[6px] leading-[8px] text-[#b7e0a8] self-end pr-[1px]">E-Trade</div>
          </div>
        </TaskBtn>
        <div className="w-[10px]" />
        <div className="w-[32px] flex justify-center">
          <svg width="32" height="30" viewBox="0 0 32 30">
            <path d="M1 5h10l2-2h16v26H1z" fill="#f5dfa0" stroke="#c9a85a" />
            <rect x="4" y="1" width="6" height="3" fill="#3cb34a" />
            <rect x="12" y="2" width="7" height="3" fill="#d9452a" />
            <rect x="21" y="3" width="7" height="3" fill="#2a8ad8" />
            <path d="M1 9h28v20H1z" fill="#fbeec0" />
            <path d="M5 29V20h20v9h-6v-4h-8v4z" fill="#7fc5ec" stroke="#3f94c8" />
          </svg>
        </div>
        <div className="w-[10px]" />
        <TaskBtn w="w-[48px]">
          <div className="w-[30px] h-[30px] rounded-full bg-[conic-gradient(from_-60deg,#e34133_0deg_120deg,#fbc116_120deg_240deg,#1fa463_240deg_360deg)] flex items-center justify-center">
            <div className="w-[15px] h-[15px] rounded-full bg-[#4a80ee] border-[2px] border-white" />
          </div>
        </TaskBtn>
        <div className="w-[2px]" />
        <TaskBtn w="w-[48px]" pressed>
          <div className="w-[32px] h-[32px] bg-gradient-to-br from-[#9a1058] to-[#c01888] flex flex-col items-center text-white">
            <div className="text-[18px] leading-[24px] font-['Liberation_Mono',monospace]">CC</div>
            <div className="text-[6px] leading-[8px] text-[#eab0d0] self-end pr-[1px]">E-Trade</div>
          </div>
        </TaskBtn>
        <span className="ml-[708px] text-[12px] -mt-[4px]">EN</span>
        <div className="ml-[5px] w-[2px] h-[22px] border-l border-[#808080] border-r border-r-white" />
        <div className="ml-[3px] w-[285px] h-[36px] flex items-center border border-t-[#808080] border-l-[#808080] border-r-white border-b-white pl-[2px]">
          <div className="flex items-center gap-[4px]">
            {trayIcons.map((ic, i) => (
              <div key={i} className="w-[20px] flex justify-center">{ic}</div>
            ))}
          </div>
          <div className="ml-[10px] w-[64px] text-[11px] leading-[14px] text-center text-[#222]"><div>9:57</div><div className="mt-[1px]">19.12.2018</div></div>
          <div className="ml-[3px] w-[15px] h-[12px] bg-gradient-to-br from-[#2a6ac8] to-[#123a80] border-b-2 border-[#333]" />
        </div>
      </div>
      <Modal />
    </div>
  );
}
